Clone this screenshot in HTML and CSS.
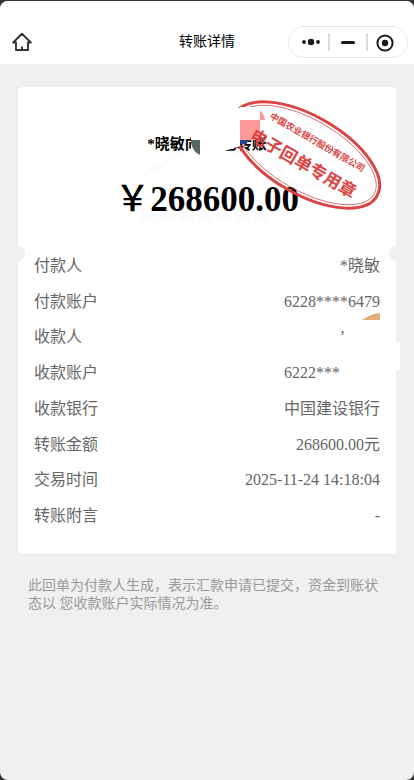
FILE: index.html
```html
<!DOCTYPE html>
<html lang="zh-CN">
<head>
<meta charset="utf-8">
<meta name="viewport" content="width=device-width, initial-scale=1">
<title>转账详情</title>
<link rel="stylesheet" href="styles.css">
</head>
<body>
<div class="app">
  <header class="navbar">
    <button class="icon-button" type="button" aria-label="首页">
      <svg width="20" height="20" viewBox="0 0 20 20" fill="none" stroke="#333" stroke-width="1.9" stroke-linejoin="round" stroke-linecap="round">
        <path d="M4 10.500H1.200L10 1.800l8.800 8.700H16V18H4z"/>
        <path d="M10 14.500V17.500" stroke-width="2" stroke-linecap="butt"/>
      </svg>
    </button>
    <h1 class="title">转账详情</h1>
    <div class="capsule">
      <button type="button" aria-label="更多">
        <svg width="20" height="20" viewBox="0 0 20 20" fill="#1a1a1a"><circle cx="3" cy="10" r="1.900"/><circle cx="10" cy="10" r="3.200"/><circle cx="17" cy="10" r="1.900"/></svg>
      </button>
      <button type="button" aria-label="最小化">
        <svg width="20" height="20" viewBox="0 0 20 20"><path d="M4.500 10.500h11" stroke="#1a1a1a" stroke-width="3" stroke-linecap="round"/></svg>
      </button>
      <button type="button" aria-label="关闭">
        <svg width="20" height="20" viewBox="0 0 20 20"><circle cx="10" cy="11" r="7.600" fill="none" stroke="#1a1a1a" stroke-width="2"/><circle cx="10" cy="11" r="3.200" fill="#1a1a1a"/></svg>
      </button>
    </div>
  </header>

  <main class="content">
    <section class="card">
      <div class="summary">
        <svg class="watermark" viewBox="18 87 378 166" aria-hidden="true">
          <path d="M142 177L208 134L240 154" fill="none" stroke="#fafbfe" stroke-width="5"/>
          <path d="M140 217H268" stroke="#fafbfe" stroke-width="9" stroke-dasharray="16 3"/>
          <circle cx="309" cy="155" r="32" fill="none" stroke="#fafbfc" stroke-width="5"/>
        </svg>
        <h2 class="headline"><span>*晓敏向</span><span>已转账</span></h2>
        <p class="amount"><span class="currency">￥</span>268600.00</p>
        <svg class="seal" viewBox="18 87 378 166" role="img" aria-label="电子回单专用章">
          <g transform="translate(306 155) rotate(30)" fill="none" stroke="#dc4444">
            <ellipse rx="82" ry="39" stroke-width="3"/>
            <ellipse rx="78.500" ry="35.500" stroke-width="0.700"/>
          </g>
          <path d="M200 108H240V146L231 149L214 154H200ZM191 134H202V157H191ZM240 107H260V120H240Z" fill="#fff"/>
          <path d="M191 140H200V155Q193 152 191 143Z" fill="#566864"/>
          <path d="M240 120H260V110Q264 114 265 120H260V140H240Z" fill="#fd999b"/>
          <path d="M240 140H249L246 144H240Z" fill="#24448f"/>
          <g class="seal-text">
            <text class="seal-company" transform="translate(317.500 142) rotate(30)" y="3.500">中国农业银行股份有限公司</text>
            <text class="seal-name" transform="translate(303.500 163) rotate(30)" y="6.500">电子回单专用章</text>
          </g>
        </svg>
      </div>
      <dl class="details">
        <div class="row"><dt>付款人</dt><dd>*晓敏</dd></div>
        <div class="row"><dt>付款账户</dt><dd>6228****6479</dd></div>
        <div class="row"><dt>收款人</dt><dd class="hidden-name">’
          <svg class="sliver" width="18" height="7" viewBox="0 0 18 7" aria-hidden="true"><path d="M0 7Q8 1 18 0V7Z" fill="#e3ad7c"/></svg></dd></div>
        <div class="row tabbed"><dt>收款账户</dt><dd class="hidden-digits">6222***</dd></div>
        <div class="row"><dt>收款银行</dt><dd>中国建设银行</dd></div>
        <div class="row"><dt>转账金额</dt><dd>268600.00元</dd></div>
        <div class="row"><dt>交易时间</dt><dd>2025-11-24 14:18:04</dd></div>
        <div class="row"><dt>转账附言</dt><dd>-</dd></div>
      </dl>
    </section>
    <p class="note">此回单为付款人生成，表示汇款申请已提交，资金到账状态以 您收款账户实际情况为准。</p>
  </main>
</div>
</body>
</html>
```
FILE: styles.css
```css
* {
  box-sizing: border-box;
}

body {
  margin: 0;
  background: #333;
  font-family: "Liberation Serif", "Noto Sans CJK SC", serif;
  color: #666;
}

h1, h2, p, dl, dd {
  margin: 0;
}

button {
  display: flex;
  align-items: center;
  justify-content: center;
  padding: 0;
  border: 0;
  background: none;
}

.app {
  min-height: calc(100vh - 1px);
  margin-top: 1px;
  overflow: hidden;
  border-radius: 8px;
  background: #f0f0f0;
}

.navbar {
  display: grid;
  grid-template-columns: 1fr auto 1fr;
  align-items: center;
  padding: 25px 6px 6px;
  background: #fff;
}

.icon-button {
  justify-self: start;
  padding-left: 6px;
}

.title {
  font-size: 14px;
  font-weight: 400;
  line-height: 20px;
  color: #000;
}

.capsule {
  display: flex;
  align-items: center;
  justify-self: end;
  width: 120px;
  height: 32px;
  padding: 0 4px;
  border: 1px solid #e6e6e6;
  border-radius: 16px;
}

.capsule button {
  flex: 1;
  height: 18px;
}

.capsule button + button {
  border-left: 2px solid #dcdcdc;
}

.content {
  padding: 23px 18px;
}

.card {
  border-radius: 4px;
  background: #fff;
  box-shadow: 0 0 2px #e6e6e6;
}

.summary {
  position: relative;
  padding-top: 46px;
  height: 167px;
  text-align: center;
  color: #000;
}

/* Ticket notches on both sides of the tear line */
.summary::before,
.summary::after {
  content: "";
  position: absolute;
  bottom: -7px;
  width: 15px;
  height: 15px;
  border-radius: 50%;
  background: #f0f0f0;
}

.summary::before {
  left: -8px;
}

.summary::after {
  right: -8px;
}

.watermark,
.seal {
  position: absolute;
  top: 0;
  left: 0;
  width: 100%;
  height: 166px;
}

.headline {
  position: relative;
  display: flex;
  justify-content: center;
  gap: 22px;
  font-size: 15px;
  font-weight: 700;
  line-height: 22px;
}

.amount {
  position: relative;
  margin-top: 25px;
  font-size: 35px;
  font-weight: 700;
  line-height: 40px;
}

.currency {
  font-weight: 500;
}

.seal-text {
  fill: #dc4444;
  font-family: "Noto Sans CJK SC", sans-serif;
  font-weight: 700;
  text-anchor: middle;
}

.seal-company {
  font-size: 9px;
}

.seal-name {
  font-size: 17px;
}

.details {
  display: flex;
  flex-direction: column;
  justify-content: space-between;
  min-height: 300px;
  padding: 0 16px 26px;
  background: linear-gradient(90deg, #f5f5f5 50%, transparent 50%) 16px 0 / 8px 1px repeat-x;
  font-size: 16px;
  line-height: 24px;
}

.row {
  position: relative;
  display: flex;
  justify-content: space-between;
}

.hidden-name {
  padding-right: 35px;
}

.hidden-digits {
  padding-right: 40px;
}

.sliver {
  position: absolute;
  top: -12px;
  right: 0;
}

/* White tab over the right edge of the card */
.tabbed::after {
  content: "";
  position: absolute;
  top: -19px;
  right: -20px;
  width: 8px;
  height: 29px;
  border-radius: 4px;
  background: #fff;
}

.note {
  padding: 23px 10px;
  font-size: 14px;
  line-height: 18px;
  color: #999;
}
```
